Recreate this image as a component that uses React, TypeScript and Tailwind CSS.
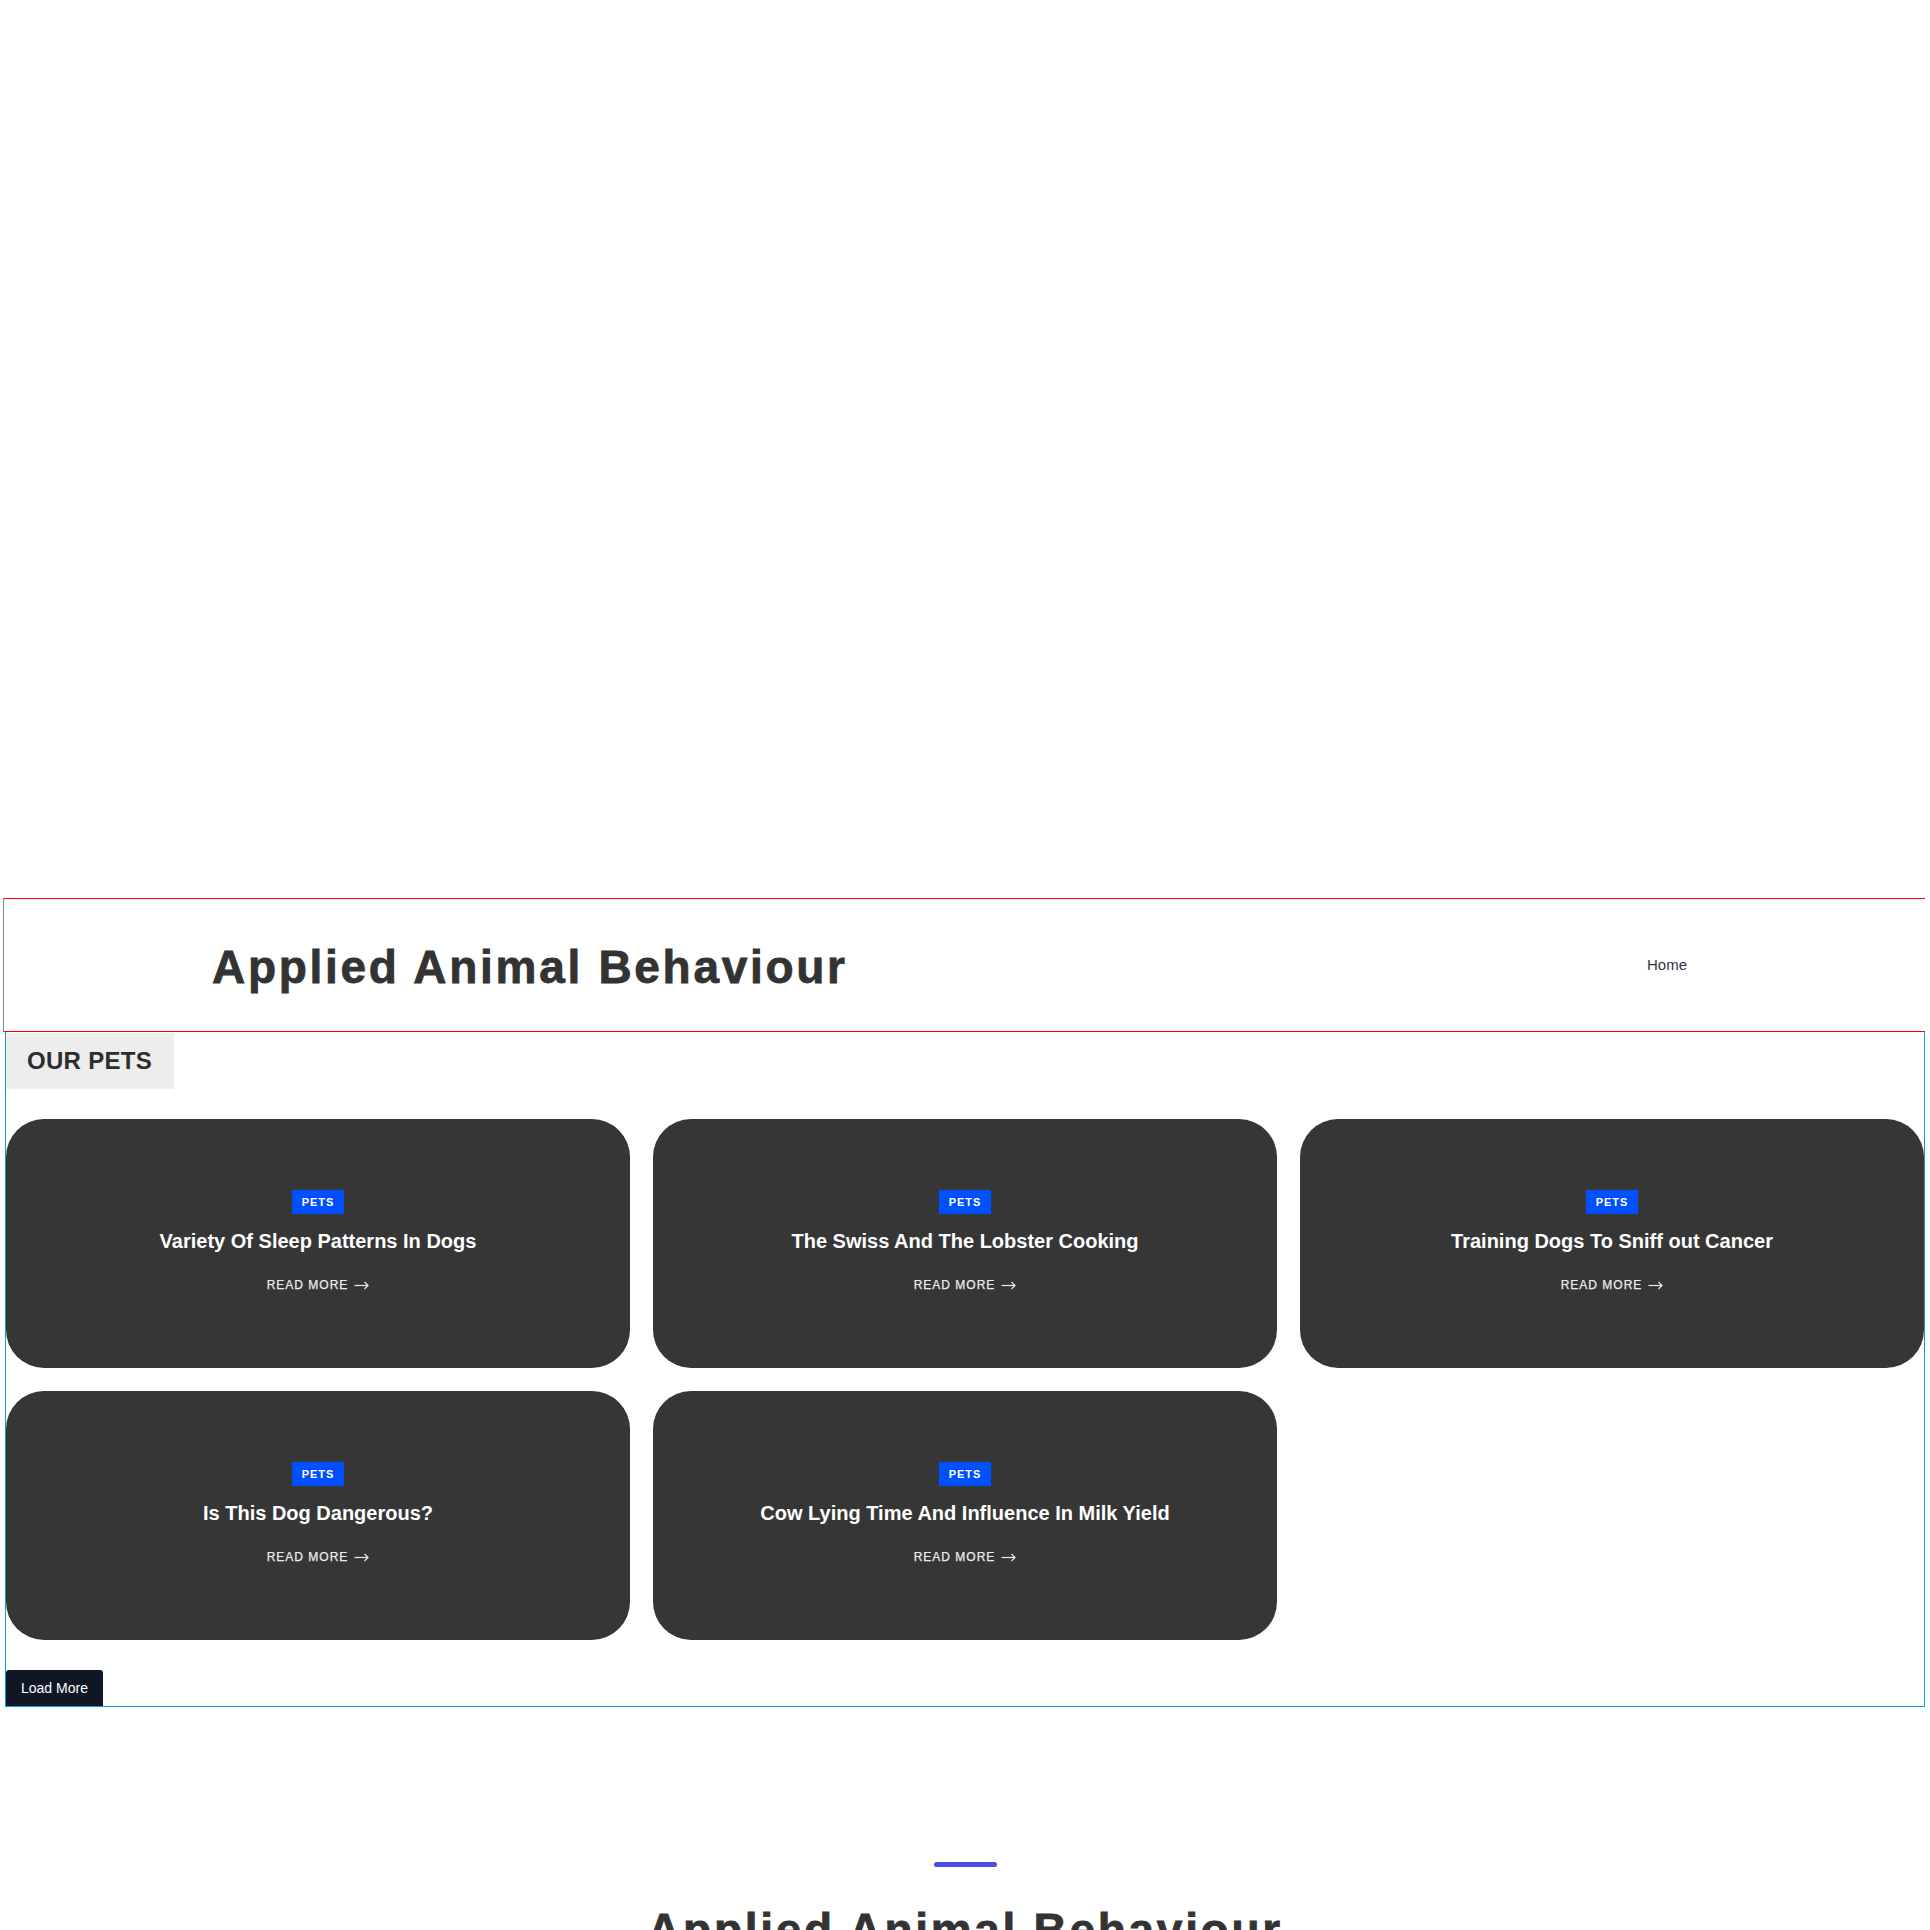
import React from "react";

interface Post {
  id: number;
  category: string;
  title: string;
}

const posts: Post[] = [
  { id: 1, category: "PETS", title: "Variety Of Sleep Patterns In Dogs" },
  { id: 2, category: "PETS", title: "The Swiss And The Lobster Cooking" },
  { id: 3, category: "PETS", title: "Training Dogs To Sniff out Cancer" },
  { id: 4, category: "PETS", title: "Is This Dog Dangerous?" },
  { id: 5, category: "PETS", title: "Cow Lying Time And Influence In Milk Yield" },
];

const font = "font-['Liberation_Sans',Arial,sans-serif]";

function ArrowRight() {
  return (
    <svg width="15" height="10" viewBox="0 0 15 10" fill="none" stroke="currentColor" strokeWidth="1.2">
      <path d="M0.5 5.5H14" />
      <path d="M10.5 2L14 5.5L10.5 9" />
    </svg>
  );
}

function PostCard({ post }: { post: Post }) {
  return (
    <div className="flex h-[249px] flex-col items-center rounded-[38px] bg-[#363636] pt-[71px]">
      {/* category badge */}
      <span className="flex h-[24px] items-center bg-[#0050ff] px-[10px] text-[11px] font-bold tracking-[1px] text-white">
        {post.category}
      </span>
      <h3 className="mt-[13px] text-[20px] font-bold leading-[28px] text-white">{post.title}</h3>
      <a
        href="#"
        className="mt-[22px] flex items-center gap-[6px] text-[12px] leading-[16px] tracking-[1px] text-[#ececec] [-webkit-text-stroke:0.25px_#ececec]"
      >
        READ MORE
        <ArrowRight />
      </a>
    </div>
  );
}

export default function App() {
  return (
    <div className={`h-[1930px] w-full overflow-hidden bg-white ${font}`}>
      {/* hero area (image never loaded) */}
      <div className="h-[898px]" />

      <header className="ml-[3px] flex h-[134px] w-[1922px] items-center justify-between border-y border-l border-y-[#ff0000] border-l-[#8a8a8a] pl-[208px] pr-[238px]">
        <h1 className="pt-[4px] text-[46px] font-bold leading-none tracking-[2.7px] text-[#333333] [-webkit-text-stroke:0.8px_#333333]">
          Applied Animal Behaviour
        </h1>
        <nav>
          <a href="#" className="text-[15px] text-[#2f3542]">
            Home
          </a>
        </nav>
      </header>

      <section className="ml-[5px] w-[1920px] border-x border-b border-[#0aa0d8] pt-px">
        <div className="flex h-[56px] w-[168px] items-center whitespace-nowrap bg-[#ededed] pl-[21px]">
          <h2 className="text-[24px] font-bold tracking-[0.3px] text-[#2d2d2d]">OUR PETS</h2>
        </div>

        <div className="mt-[30px] grid grid-cols-3 gap-x-[23px] gap-y-[23px]">
          {posts.map((p) => (
            <PostCard key={p.id} post={p} />
          ))}
        </div>

        <button className="mt-[30px] flex h-[36px] items-center rounded-t-[3px] bg-[#0f1726] px-[15px] text-[14px] text-white">
          Load More
        </button>
      </section>

      <div className="mt-[155px] flex flex-col items-center">
        <div className="h-[5px] w-[63px] rounded-full bg-[#4a4de6]" />
        <h2 className="mt-[40px] text-[46px] font-bold leading-none tracking-[2.7px] text-[#333333] [-webkit-text-stroke:0.8px_#333333]">
          Applied Animal Behaviour
        </h2>
      </div>
    </div>
  );
}
